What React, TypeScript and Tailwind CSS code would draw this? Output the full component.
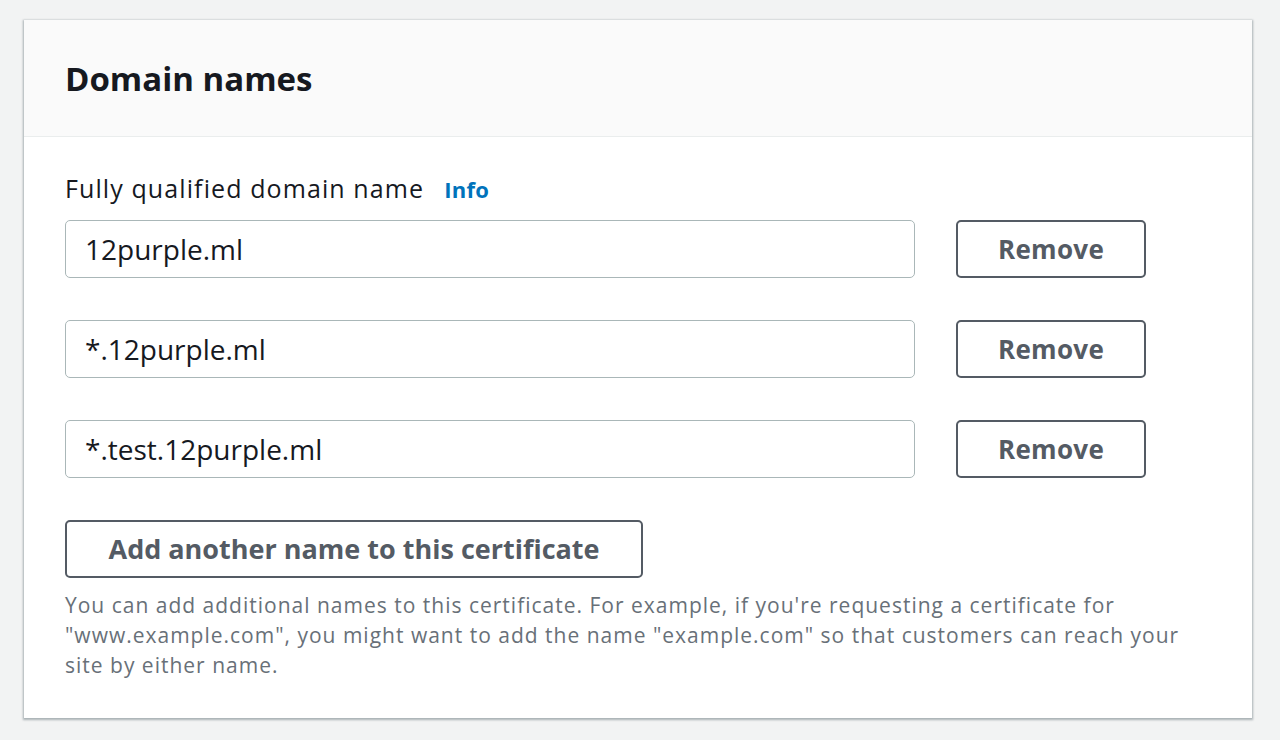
const names = ['12purple.ml', '*.12purple.ml', '*.test.12purple.ml'];

function NameRow({ value }: { value: string }) {
  return (
    <div className="flex items-center">
      <div className="flex h-[58px] w-[850px] items-center rounded-[5px] border border-[#aab7b8] bg-white px-[19px] text-[28px] text-[#16191f]">
        {value}
      </div>
      <button className="ml-[41px] h-[58px] w-[190px] rounded-[5px] border-2 border-[#545b64] bg-white text-[26px] font-bold tracking-[0.3px] text-[#545b64]">
        Remove
      </button>
    </div>
  );
}

export default function App() {
  return (
    <div className="min-h-screen w-full bg-[#f2f3f3] pl-[24px] pt-[20px] font-['Open_Sans',sans-serif]">
      <div className="w-[1228px] bg-white shadow-[0_1px_2px_1px_rgba(0,28,36,0.3)]">
        <div className="flex h-[117px] items-center border-b border-[#eaeded] bg-[#fafafa] pl-[41px]">
          <h2 className="text-[33px] font-bold leading-none text-[#16191f]">Domain names</h2>
        </div>
        <div className="pl-[41px] pb-[38px] pt-[37px]">
          <div className="mb-[16px] flex h-[30px] items-center text-[25px] tracking-[1.1px] text-[#16191f]">
            <span>Fully qualified domain name</span>
            <span className="ml-[20px] text-[22px] font-bold tracking-[0.3px] text-[#0073bb]">Info</span>
          </div>
          <div className="flex flex-col gap-[42px]">
            {names.map((n) => (
              <NameRow key={n} value={n} />
            ))}
          </div>
          <button className="mt-[42px] h-[58px] w-[578px] rounded-[5px] border-2 border-[#545b64] bg-white text-[27px] font-bold text-[#545b64]">
            Add another name to this certificate
          </button>
          <p className="mt-[12px] w-[1140px] text-[21px] leading-[30px] tracking-[1px] text-[#687078]">
            You can add additional names to this certificate. For example, if you're requesting a certificate for
            "www.example.com", you might want to add the name "example.com" so that customers can reach your site by
            either name.
          </p>
        </div>
      </div>
    </div>
  );
}
